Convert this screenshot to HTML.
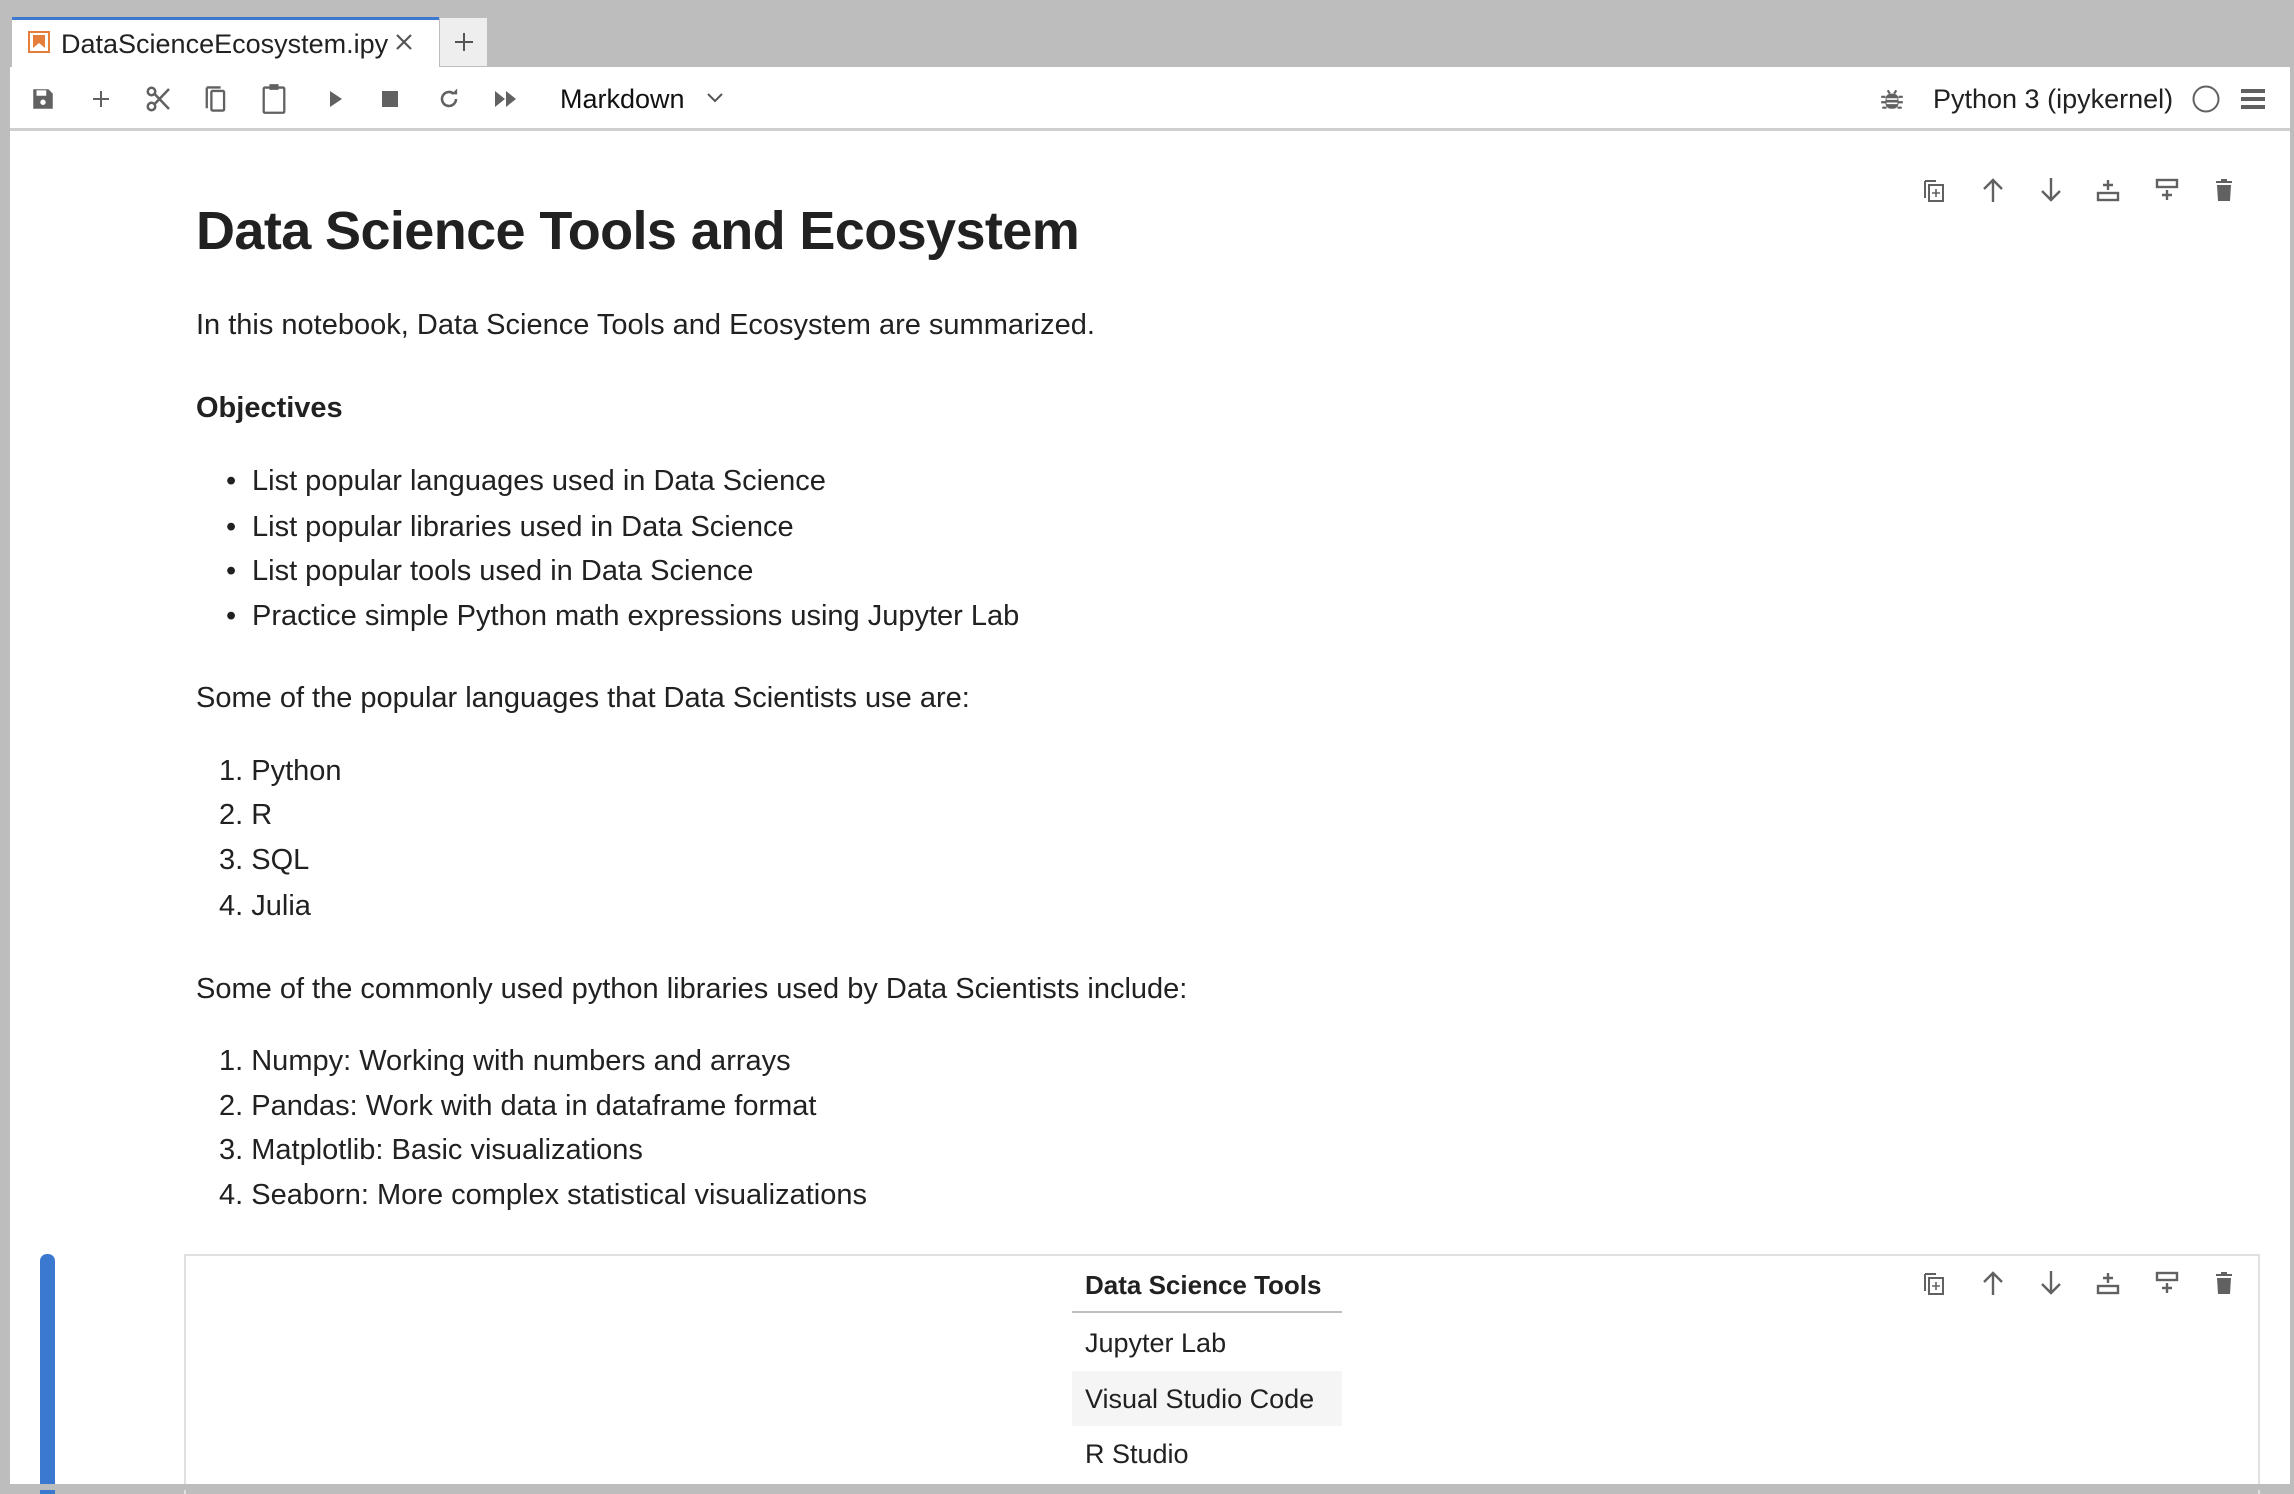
<!DOCTYPE html>
<html><head><meta charset="utf-8"><style>
*{margin:0;padding:0;box-sizing:border-box}
body{width:2294px;height:1490px;background:#bdbdbd;position:relative;overflow:hidden;font-family:"Liberation Sans",sans-serif;color:#212121}
.abs{position:absolute;white-space:nowrap}
.t{position:absolute;white-space:nowrap;font-size:29px;line-height:40px;height:40px}
.ic{position:absolute}
</style></head><body>
<div class="abs" style="left:12px;top:17px;width:427px;height:50px;background:#fff;border-top:3px solid #3b78d0"></div>
<svg class="ic" style="left:28px;top:31px" width="22" height="22" viewBox="0 0 22 22"><rect x="1" y="1" width="20" height="20" fill="#fff" stroke="#e57e3c" stroke-width="2"/><path d="M5 4h12v13l-6-5-6 5z" fill="#e57e3c"/></svg>
<div class="abs" style="left:61px;top:27px;font-size:27px;line-height:34px;color:#212121">DataScienceEcosystem.ipy</div>
<svg class="ic" style="left:394px;top:32px" width="20" height="20" viewBox="0 0 20 20"><path d="M3 3L17 17M17 3L3 17" stroke="#555" stroke-width="2.2"/></svg>
<div class="abs" style="left:440px;top:18px;width:47px;height:48px;background:#eeeeee"></div>
<svg class="ic" style="left:452px;top:30px" width="24" height="24" viewBox="0 0 24 24"><path d="M12 3v18M3 12h18" stroke="#555" stroke-width="2"/></svg>
<div class="abs" style="left:10px;top:67px;width:2280px;height:1417px;background:#fff"></div>
<div class="abs" style="left:10px;top:128px;width:2280px;height:3px;background:#cfcfcf"></div>
<svg class="ic" style="left:30px;top:86px" width="26" height="26" viewBox="0 0 24 24"><path d="M3 3h14l4 4v14H3z" fill="#616161"/><rect x="6" y="4" width="9" height="5" fill="#fff"/><circle cx="12" cy="15" r="2.5" fill="#fff"/></svg>
<svg class="ic" style="left:89px;top:87px" width="24" height="24" viewBox="0 0 24 24"><path d="M12 4v16M4 12h16" stroke="#616161" stroke-width="2"/></svg>
<svg class="ic" style="left:144px;top:84px" width="30" height="30" viewBox="0 0 24 24"><circle cx="6" cy="6" r="3" fill="none" stroke="#616161" stroke-width="2"/><circle cx="6" cy="18" r="3" fill="none" stroke="#616161" stroke-width="2"/><path d="M8.5 8L20 20M8.5 16L20 4" stroke="#616161" stroke-width="2"/></svg>
<svg class="ic" style="left:202px;top:84px" width="28" height="30" viewBox="0 0 24 26"><path d="M4 3h12M4 3v18" stroke="#616161" stroke-width="2" fill="none"/><rect x="8" y="6" width="11" height="17" rx="1" fill="none" stroke="#616161" stroke-width="2"/></svg>
<svg class="ic" style="left:260px;top:83px" width="28" height="32" viewBox="0 0 24 28"><rect x="3" y="4" width="18" height="22" rx="1" fill="none" stroke="#616161" stroke-width="2"/><rect x="8" y="1" width="8" height="5" fill="#616161"/></svg>
<svg class="ic" style="left:324px;top:88px" width="22" height="22" viewBox="0 0 22 22"><path d="M6 3l12 8-12 8z" fill="#616161"/></svg>
<svg class="ic" style="left:380px;top:89px" width="20" height="20" viewBox="0 0 20 20"><rect x="2" y="2" width="16" height="16" fill="#616161"/></svg>
<svg class="ic" style="left:435px;top:85px" width="28" height="28" viewBox="0 0 24 24"><path d="M18 12a6 6 0 1 1-2-4.5" fill="none" stroke="#616161" stroke-width="2.2"/><path d="M13 5h5V0z" fill="#616161" transform="translate(1 3)"/></svg>
<svg class="ic" style="left:492px;top:88px" width="28" height="22" viewBox="0 0 28 22"><path d="M3 3l10 8-10 8zM14 3l10 8-10 8z" fill="#616161"/></svg>
<div class="abs" style="left:560px;top:81px;font-size:27px;line-height:36px;color:#111">Markdown</div>
<svg class="ic" style="left:705px;top:90px" width="20" height="16" viewBox="0 0 20 16"><path d="M3 4l7 7 7-7" stroke="#555" stroke-width="2" fill="none"/></svg>
<svg class="ic" style="left:1879px;top:86px" width="26" height="26" viewBox="0 0 24 24"><path d="M8 4l2 3M16 4l-2 3" stroke="#616161" stroke-width="2"/><rect x="6" y="7" width="12" height="14" rx="5" fill="#616161"/><path d="M2 10h4M18 10h4M2 15h4M18 15h4M3 20h4M17 20h4" stroke="#616161" stroke-width="2"/><path d="M7 12h10M7 16h10" stroke="#fff" stroke-width="1.5"/></svg>
<div class="abs" style="left:1933px;top:81px;font-size:27px;line-height:36px;color:#212121">Python 3 (ipykernel)</div>
<svg class="ic" style="left:2191px;top:84px" width="30" height="30" viewBox="0 0 30 30"><circle cx="15" cy="15" r="12.5" fill="none" stroke="#616161" stroke-width="2"/></svg>
<svg class="ic" style="left:2240px;top:87px" width="26" height="24" viewBox="0 0 26 24"><path d="M1 4h24M1 12h24M1 20h24" stroke="#616161" stroke-width="4"/></svg>

<svg width="0" height="0" style="position:absolute"><defs>
<g id="ctb">
<g><path d="M3 3h11M3 3v17" stroke="#616161" stroke-width="2" fill="none"/><rect x="7" y="7" width="14" height="16" fill="none" stroke="#616161" stroke-width="2"/><path d="M14 11v8M10 15h8" stroke="#616161" stroke-width="1.6"/></g>
<g transform="translate(59 0)"><path d="M12 24V2M3 11l9-9 9 9" stroke="#616161" stroke-width="2.4" fill="none"/></g>
<g transform="translate(117 0)"><path d="M12 0v22M3 13l9 9 9-9" stroke="#616161" stroke-width="2.4" fill="none"/></g>
<g transform="translate(174 0)"><path d="M12 2v10M7 7h10" stroke="#616161" stroke-width="2.4"/><rect x="2" y="15" width="20" height="7" fill="none" stroke="#616161" stroke-width="2.4"/></g>
<g transform="translate(233 0)"><rect x="2" y="2" width="20" height="7" fill="none" stroke="#616161" stroke-width="2.4"/><path d="M12 12v10M7 17h10" stroke="#616161" stroke-width="2.4"/></g>
<g transform="translate(290 0)"><path d="M4 3h16v2H4zM9 1h6v2H9z" fill="#616161"/><path d="M5 7h14l-1 16H6z" fill="#616161"/></g>
</g></defs></svg>
<svg class="ic" style="left:1922px;top:178px" width="320" height="26" viewBox="0 0 320 26"><use href="#ctb"/></svg>
<svg class="ic" style="left:1922px;top:1271px" width="320" height="26" viewBox="0 0 320 26"><use href="#ctb"/></svg>

<div class="abs" style="left:196px;top:197px;font-size:54px;line-height:68px;font-weight:bold;color:#212121;letter-spacing:-0.6px">Data Science Tools and Ecosystem</div>
<div class="t" style="left:196px;top:305px">In this notebook, Data Science Tools and Ecosystem are summarized.</div>
<div class="t" style="left:196px;top:388px;font-weight:bold">Objectives</div>
<div class="t" style="left:226px;top:461px">•</div><div class="t" style="left:252px;top:461px">List popular languages used in Data Science</div>
<div class="t" style="left:226px;top:507px">•</div><div class="t" style="left:252px;top:507px">List popular libraries used in Data Science</div>
<div class="t" style="left:226px;top:551px">•</div><div class="t" style="left:252px;top:551px">List popular tools used in Data Science</div>
<div class="t" style="left:226px;top:596px">•</div><div class="t" style="left:252px;top:596px">Practice simple Python math expressions using Jupyter Lab</div>
<div class="t" style="left:196px;top:678px">Some of the popular languages that Data Scientists use are:</div>
<div class="t" style="left:219px;top:751px">1. Python</div>
<div class="t" style="left:219px;top:795px">2. R</div>
<div class="t" style="left:219px;top:840px">3. SQL</div>
<div class="t" style="left:219px;top:886px">4. Julia</div>
<div class="t" style="left:196px;top:969px">Some of the commonly used python libraries used by Data Scientists include:</div>
<div class="t" style="left:219px;top:1041px">1. Numpy: Working with numbers and arrays</div>
<div class="t" style="left:219px;top:1086px">2. Pandas: Work with data in dataframe format</div>
<div class="t" style="left:219px;top:1130px">3. Matplotlib: Basic visualizations</div>
<div class="t" style="left:219px;top:1175px">4. Seaborn: More complex statistical visualizations</div>

<div class="abs" style="left:40px;top:1254px;width:15px;height:240px;background:#3b78d0;border-radius:7px 7px 0 0"></div>
<div class="abs" style="left:184px;top:1254px;width:2076px;height:240px;border:2px solid #e0e0e0;border-bottom:none"></div>
<div class="t" style="left:1085px;top:1265px;font-size:26px;font-weight:bold">Data Science Tools</div>
<div class="abs" style="left:1072px;top:1311px;width:270px;height:2px;background:#bdbdbd"></div>
<div class="t" style="left:1085px;top:1323px;font-size:27px">Jupyter Lab</div>
<div class="abs" style="left:1072px;top:1371px;width:270px;height:55px;background:#f5f5f5"></div>
<div class="t" style="left:1085px;top:1379px;font-size:27px">Visual Studio Code</div>
<div class="t" style="left:1085px;top:1434px;font-size:27px">R Studio</div>
<div class="abs" style="left:0;top:1484px;width:2294px;height:6px;background:#bdbdbd"></div>
</body></html>
